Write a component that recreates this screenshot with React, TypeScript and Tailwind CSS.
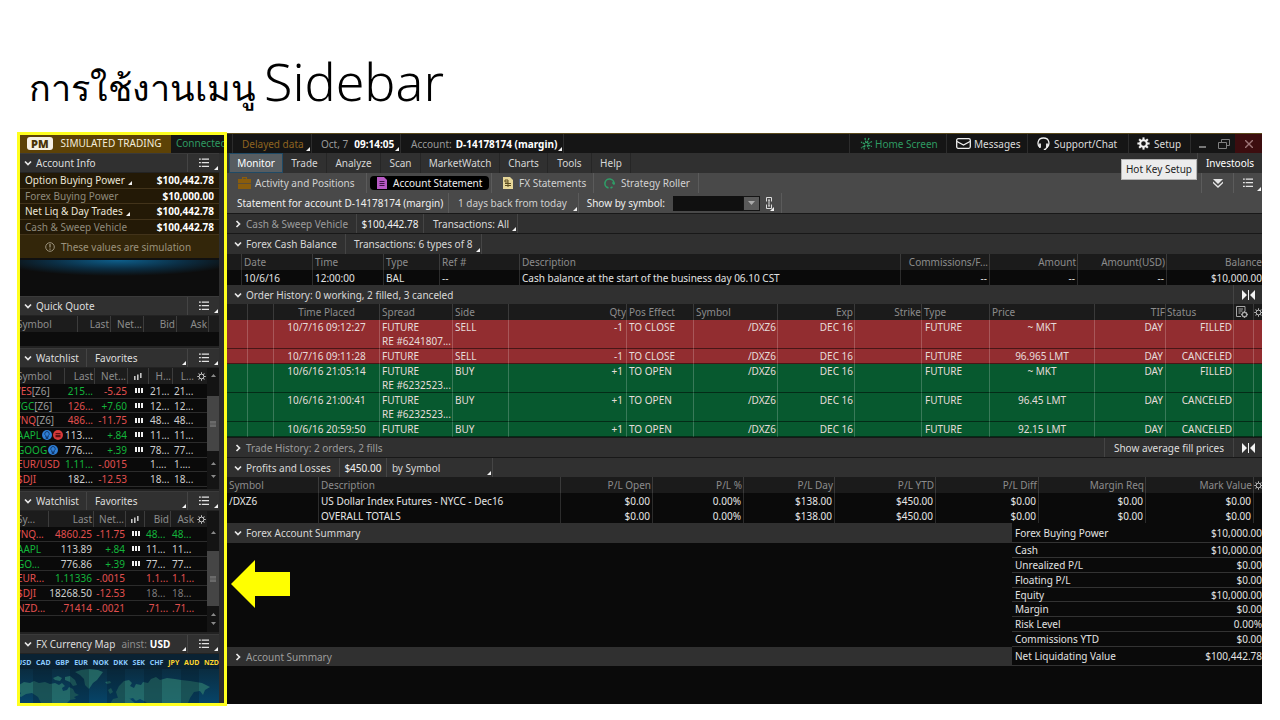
import type { ReactNode } from "react";

function Corner() {
  return (
    <svg className="absolute bottom-0.5 right-px size-[4px]" viewBox="0 0 4 4" aria-hidden="true">
      <path d="M4 0v4H0z" fill="#f2f2f2" />
    </svg>
  );
}

function Chevron({ open = true }: { open?: boolean }) {
  return (
    <svg className="mr-1 size-2 shrink-0" viewBox="0 0 8 8" fill="none" stroke="#e8e8e8" strokeWidth="1.7" aria-hidden="true">
      {open ? <path d="M1 2.5 4 5.5 7 2.5" /> : <path d="M2.5 1 5.5 4 2.5 7" />}
    </svg>
  );
}

function ListIcon() {
  return (
    <svg className="h-[10px] w-[10px]" viewBox="0 0 11 10" fill="#e4e4e4" aria-hidden="true">
      <path d="M0 0h2v1.4H0zM3 0h8v1.4H3zM0 4h2v1.4H0zM3 4h8v1.4H3zM0 8h2v1.4H0zM3 8h8v1.4H3z" />
    </svg>
  );
}

function Gear({ className, color = "#f0f0f0", thin = false }: { className: string; color?: string; thin?: boolean }) {
  const teeth = [0, 45, 90, 135, 180, 225, 270, 315];
  return (
    <svg className={className} viewBox="0 0 14 14" fill="none" stroke={color} aria-hidden="true">
      <circle cx="7" cy="7" r="3.6" strokeWidth={thin ? 1.5 : 2.2} />
      {teeth.map((t) => (
        <path key={t} d="M7 .4v2.800" strokeWidth={thin ? 1.5 : 2.2} transform={`rotate(${t} 7 7)`} />
      ))}
    </svg>
  );
}

function Bars() {
  return (
    <svg className="mx-auto block h-[5px] w-2" viewBox="0 0 8 5" fill="#f0f0f0" aria-hidden="true">
      <path d="M0 0h2v5H0zM3 0h2v5H3zM6 0h2v5H6z" />
    </svg>
  );
}

function ChartGlyph() {
  return (
    <svg className="mx-auto block h-[9px] w-2" viewBox="0 0 8 9" fill="#c4c4c4" aria-hidden="true">
      <path d="M0 4h1.6v4H0zM3 2.5h1.6v5.500H3zM6 1h1.600v5H6z" />
    </svg>
  );
}

function Collapse() {
  return (
    <svg className="h-[10px] w-[13px]" viewBox="0 0 13 10" fill="#f2f2f2" aria-hidden="true">
      <path d="M0 0l5 5-5 5zM13 0L8 5l5 5zM6 0h1v10H6z" />
    </svg>
  );
}

function Cell({ className = "", children }: { className?: string; children?: ReactNode }) {
  return (
    <div className={`relative flex h-full shrink-0 items-center whitespace-nowrap border-r border-white/10 ${className}`}>
      {children}
    </div>
  );
}

function Cols({ widths }: { widths: (number | null)[] }) {
  return (
    <colgroup>
      {widths.map((w, i) => (
        <col key={i} style={w === null ? undefined : { width: w }} />
      ))}
    </colgroup>
  );
}

function PanelBar({ title, extra }: { title: string; extra?: ReactNode }) {
  return (
    <div className="flex h-5 border-y border-t-[#3a3a3a] border-b-[#232323] bg-[#303030] text-[#dedede]">
      <button className="flex items-center whitespace-nowrap pl-[7px]">
        <Chevron />
        {title}
      </button>
      {extra}
      <button className="relative ml-auto flex w-8 items-center justify-center border-l border-[#444]" aria-label={`${title} menu`}>
        <ListIcon />
        <Corner />
      </button>
    </div>
  );
}

function ScrollTrack({ lead }: { lead: string }) {
  return (
    <div className="flex w-3 shrink-0 flex-col items-center bg-[#141414]" aria-hidden="true">
      <div className={`flex w-full items-end justify-center ${lead}`}>
        <svg className="h-[3px] w-[5px]" viewBox="0 0 5 3" fill="#8a8a8a"><path d="M0 3h5L2.500 0z" /></svg>
      </div>
      <div className="flex h-[55px] w-full items-center justify-center bg-[#454545]">
        <div className="h-[6px] w-[6px] border-y-2 border-[#6a6a6a] bg-[#5e5e5e]" />
      </div>
      <div className="flex flex-1 flex-col items-center justify-evenly">
        <svg className="h-[3px] w-[5px]" viewBox="0 0 5 3" fill="#8a8a8a"><path d="M0 3h5L2.500 0z" /></svg>
        <svg className="h-[3px] w-[5px]" viewBox="0 0 5 3" fill="#8a8a8a"><path d="M0 0h5L2.500 3z" /></svg>
      </div>
    </div>
  );
}

const RED = "text-[#e2504f]";
const GREEN = "text-[#13b53b]";
const LIGHT = "text-[#cfcfcf]";
const DIM = "text-[#7c7c7c]";

type Quote = {
  sym: string;
  tail?: string;
  symColor: string;
  last: string;
  lastColor: string;
  net: string;
  netColor: string;
  bars: boolean;
  a: string;
  b: string;
  abColor: string;
  badges?: string[];
};

const quotesOne: Quote[] = [
  { sym: "/ES", tail: "[Z6]", symColor: RED, last: "215...", lastColor: GREEN, net: "-5.25", netColor: RED, bars: true, a: "21...", b: "21...", abColor: LIGHT },
  { sym: "/GC", tail: "[Z6]", symColor: GREEN, last: "126...", lastColor: RED, net: "+7.60", netColor: GREEN, bars: true, a: "12...", b: "12...", abColor: LIGHT },
  { sym: "/NQ", tail: "[Z6]", symColor: RED, last: "486...", lastColor: RED, net: "-11.75", netColor: RED, bars: true, a: "48...", b: "48...", abColor: LIGHT },
  { sym: "AAPL", symColor: GREEN, last: "113....", lastColor: LIGHT, net: "+.84", netColor: GREEN, bars: true, a: "11...", b: "11...", abColor: LIGHT, badges: ["#2f7fd6", "#d63a3a"] },
  { sym: "GOOG", symColor: GREEN, last: "776....", lastColor: LIGHT, net: "+.39", netColor: GREEN, bars: true, a: "78...", b: "77...", abColor: LIGHT, badges: ["#2f7fd6"] },
  { sym: "EUR/USD", symColor: RED, last: "1.11...", lastColor: GREEN, net: "-.0015", netColor: RED, bars: false, a: "1....", b: "1....", abColor: LIGHT },
  { sym: "$DJI", symColor: RED, last: "182...", lastColor: LIGHT, net: "-12.53", netColor: RED, bars: false, a: "18...", b: "18...", abColor: LIGHT },
];

const quotesTwo: Quote[] = [
  { sym: "/NQ...", symColor: RED, last: "4860.25", lastColor: RED, net: "-11.75", netColor: RED, bars: true, a: "48...", b: "48...", abColor: GREEN },
  { sym: "AAPL", symColor: GREEN, last: "113.89", lastColor: LIGHT, net: "+.84", netColor: GREEN, bars: true, a: "11...", b: "11...", abColor: LIGHT },
  { sym: "GO...", symColor: GREEN, last: "776.86", lastColor: LIGHT, net: "+.39", netColor: GREEN, bars: true, a: "77...", b: "77...", abColor: LIGHT },
  { sym: "EUR...", symColor: RED, last: "1.11336", lastColor: GREEN, net: "-.0015", netColor: RED, bars: false, a: "1.1...", b: "1.1...", abColor: RED },
  { sym: "$DJI", symColor: RED, last: "18268.50", lastColor: LIGHT, net: "-12.53", netColor: RED, bars: false, a: "18...", b: "18...", abColor: DIM },
  { sym: "NZD...", symColor: RED, last: ".71414", lastColor: RED, net: "-.0021", netColor: RED, bars: false, a: ".71...", b: ".71...", abColor: RED },
];

function Watchlist({ heads, widths, quotes, height, lead }: { heads: string[]; widths: number[]; quotes: Quote[]; height: string; lead: string }) {
  const th = "h-4 overflow-hidden whitespace-nowrap border-r border-[#3c3c3c] pr-px text-right font-normal";
  return (
    <>
      <PanelBar
        title="Watchlist"
        extra={
          <button className="relative ml-[7px] flex flex-1 items-center border-l border-[#444] pl-2">
            Favorites
            <Corner />
          </button>
        }
      />
      <div className="flex h-[121px] bg-[#0a0a0a]">
        <div className="min-w-0 flex-1">
          <table className="w-full table-fixed border-separate border-spacing-0">
            <Cols widths={widths} />
            <thead className="bg-[#1c1c1c] text-[#8c8c8c]">
              <tr>
                <th className={`${th} text-left!`}>{heads[0]}</th>
                <th className={th}>{heads[1]}</th>
                <th className={th}>{heads[2]}</th>
                <th className={th}><ChartGlyph /></th>
                <th className={th}>{heads[3]}</th>
                <th className={`${th} border-r-0!`}>{heads[4]}</th>
                <th className="h-4 font-normal"><Gear thin className="mx-auto size-[9px]" color="#c8c8c8" /></th>
              </tr>
            </thead>
          </table>
          <table className={`w-full table-fixed border-separate border-spacing-0 leading-[12px] ${height}`}>
            <Cols widths={widths} />
            <tbody>
              {quotes.map((q) => (
                <tr key={q.sym} className="whitespace-nowrap *:border-b *:border-[#2c2c2c]">
                  <td className={q.symColor}>
                    <span className="flex items-center">
                      {q.sym}
                      {q.tail && <span className="text-[#9a9a9a]">{q.tail}</span>}
                      {q.badges?.map((c) => (
                        <svg key={c} className="ml-px size-[10px] shrink-0" viewBox="0 0 10 10" aria-hidden="true">
                          <circle cx="5" cy="5" r="5" fill={c} />
                          {c === "#2f7fd6" ? (
                            <path d="M5 1.500a2.300 2.300 0 0 1 1.200 4.200V7H3.800V5.700A2.300 2.300 0 0 1 5 1.500zM4 7.600h2v.9H4z" fill="none" stroke="#0d2f5c" strokeWidth=".8" />
                          ) : (
                            <path d="M2.500 3h5v1.200h-5zM2.500 5h5v2.200h-5z" fill="#5c1010" />
                          )}
                        </svg>
                      ))}
                    </span>
                  </td>
                  <td className={`pr-[2px] text-right ${q.lastColor}`}><span className="flex justify-end">{q.last}</span></td>
                  <td className={`pr-px text-right ${q.netColor}`}><span className="flex justify-end">{q.net}</span></td>
                  <td>{q.bars && <Bars />}</td>
                  <td className={`pl-px ${q.abColor}`}>{q.a}</td>
                  <td className={`pl-px ${q.abColor}`}>{q.b}</td>
                  <td />
                </tr>
              ))}
            </tbody>
          </table>
        </div>
        <ScrollTrack lead={lead} />
      </div>
    </>
  );
}

const account = [
  { label: "Option Buying Power", value: "$100,442.78", menu: true },
  { label: "Forex Buying Power", value: "$10,000.00", menu: false },
  { label: "Net Liq & Day Trades", value: "$100,442.78", menu: true },
  { label: "Cash & Sweep Vehicle", value: "$100,442.78", menu: false },
];

const currencies = ["USD", "CAD", "GBP", "EUR", "NOK", "DKK", "SEK", "CHF", "JPY", "AUD", "NZD"];

function CurrencyMap() {
  return (
    <div className="flex h-[50px] flex-col bg-[#0a3149]">
      <div className="flex justify-between bg-[#0a2233] pt-[3px] text-[7px] font-bold leading-[12px]">
        {currencies.map((c, i) => (
          <span key={c} className={i > 7 ? "text-[#ffd52e]" : "text-[#8ccbff]"}>{c}</span>
        ))}
      </div>
      <svg className="w-full flex-1" viewBox="0 0 202 35" preserveAspectRatio="none" aria-hidden="true">
        <defs>
          <linearGradient id="sea" x1="0" y1="0" x2="0" y2="1">
            <stop offset="0" stopColor="#0a2c40" />
            <stop offset="1" stopColor="#06456a" />
          </linearGradient>
        </defs>
        <path d="M0 0h202v35H0z" fill="url(#sea)" />
        <g fill="#2b766c" opacity=".75">
          <path d="M2 16l5-3 6 1 4-2 5 2 6-1 5 2 5-1 4 2 3-2 3 3-3 2 1 3 4-1 2-3 4 2 2 4 4 2-5 2 2 2-6 1-4 4-2 4H27l-3-5-3-6-6-4-6 1-5 3-2-1 2-3-3-2z" />
          <path d="M36 9l5-2 4 2-2 3-5-1zM48 8l5-1 5 4 2 5-4 1-3-4-5-2z" />
          <path d="M58 3l6-2 8-1 9 1 5 2-3 4-3 4-4 3-4 6-4-4-1-6-4-4z" />
          <path d="M99 23l3-6 5-5 5-1 3 3-2 3 4 2 2-4 5 1 2-3 5 1 3-4 5-2 4 3 7-2 8 1 6 1 9 1 12 2 8 4-5 3-2 5-3-4-6 1-4 6-2 5-3 4h-9l-4-4-5 3-6-3-4 4h-8l-3-5-6-3-4 2-3-3-4 1-3 4-5 1-2-3z" />
          <path d="M88 13l5-1 1 2-4 1zM91 21l3-2 2 4-3 2zM96 30l8-2 9 2 6 5H93z" />
        </g>
        <g fill="#041826" opacity=".28">
          <path d="M16 0h19v35H16zM53 0h19v35H53zM90 0h18v35H90zM127 0h18v35h-18zM164 0h18v35h-18z" />
        </g>
      </svg>
    </div>
  );
}

function Sidebar() {
  return (
    <aside className="relative flex w-[210px] shrink-0 flex-col overflow-hidden bg-[#2d2d2d]">
      <div className="flex h-5 items-center whitespace-nowrap bg-[#151515]">
        <div className="flex h-full w-[154px] shrink-0 items-center bg-[#5d4206] pl-2.5 text-[#f3ecdc]">
          <span className="mr-2 rounded-[3px] bg-[#f6f1e4] px-1 text-[11px] font-black leading-[13px] text-[#4a3508]">PM</span>
          SIMULATED TRADING
        </div>
        <span className="pl-[5px] text-[#2f9a62]">Connected</span>
      </div>
      <div className="mr-2 flex flex-col bg-[#0c0c0c]">
        <PanelBar title="Account Info" />
        <table className="h-[62px] w-full border-separate border-spacing-0 bg-[#231906] leading-[14px]">
          <tbody>
            {account.map((r) => (
              <tr key={r.label} className="*:border-b *:border-[#42331a]">
                <th scope="row" className={`pl-2 text-left font-normal ${r.menu ? "text-[#ebe6d8]" : "text-[#8f8a7c]"}`}>
                  <span className="relative pr-2">
                    {r.label}
                    {r.menu && <Corner />}
                  </span>
                </th>
                <td className="pr-[5px] text-right font-bold text-white">{r.value}</td>
              </tr>
            ))}
          </tbody>
        </table>
        <div className="flex h-[23px] items-center justify-center gap-1.5 bg-[#33260a] text-[#9b927c]">
          <svg className="size-[10px]" viewBox="0 0 10 10" fill="none" stroke="currentColor" aria-hidden="true">
            <circle cx="5" cy="5" r="4.300" />
            <path d="M5 2v3.500M5 6.500v1.200" strokeWidth="1.300" />
          </svg>
          These values are simulation
        </div>
        <div className="h-[38px] border-t-2 border-[#101010] bg-[radial-gradient(ellipse_60%_16px_at_50%_0%,#0d5f8c,#0b2e44_55%,#0d0d0d)]" />
        <PanelBar title="Quick Quote" />
        <table className="w-full table-fixed border-separate border-spacing-0 bg-[#1c1c1c] text-[#8c8c8c]">
          <Cols widths={[61, 33, 33, 33, 32, null]} />
          <thead>
            <tr className="*:h-4 *:whitespace-nowrap *:border-r *:border-[#3c3c3c] *:pr-px *:text-right *:font-normal">
              <th className="text-left!">Symbol</th>
              <th>Last</th>
              <th>Net...</th>
              <th>Bid</th>
              <th>Ask</th>
              <th className="border-r-0!" />
            </tr>
          </thead>
        </table>
        <div className="h-4 border-b-2 border-[#222]" />
        <Watchlist heads={["Symbol", "Last", "Net...", "H...", "L..."]} widths={[48, 30, 33, 21, 24, 22, 12]} quotes={quotesOne} height="h-[103px]" lead="h-7 pb-[19px]" />
        <div className="h-0.5 bg-[#222]" />
        <Watchlist heads={["Sy...", "Last", "Net...", "Bid", "Ask"]} widths={[32, 45, 32, 19, 26, 24, 12]} quotes={quotesTwo} height="h-[89px]" lead="h-10 pb-[17px]" />
        <div className="h-0.5 bg-[#222]" />
        <PanelBar
          title="FX Currency Map"
          extra={
            <button className="relative flex flex-1 items-center gap-[3px] pl-1.5">
              <span className="text-[#8d8d8d]">ainst:</span>
              <b className="text-white">USD</b>
              <Corner />
            </button>
          }
        />
        <CurrencyMap />
      </div>
    </aside>
  );
}

function TopBar() {
  return (
    <header className="flex h-5 border-t border-[#5a4a1c] bg-[#151515] text-[#dcdcdc]">
      <Cell className="w-[6px]" />
      <Cell className="w-[79px] pl-[9px] text-[#8f6420]">Delayed data<Corner /></Cell>
      <Cell className="w-[89px] gap-1.5 pl-[9px]"><span className="text-[#9a9a9a]">Oct, 7</span><b className="text-white">09:14:05</b><Corner /></Cell>
      <Cell className="w-[163px] gap-1 pl-2.5"><span className="text-[#9a9a9a]">Account:</span><b className="text-white">D-14178174 (margin)</b><Corner /></Cell>
      <Cell className="min-w-0 flex-1 shrink" />
      <Cell className="w-[97px] gap-0.5 pl-2.5 text-[#2f9a62]">
        <svg className="size-[13px]" viewBox="0 0 13 13" fill="none" stroke="#2fa066" strokeWidth="1.300" aria-hidden="true">
          <path d="M6 6 5 1M7 6l2-5M7.500 7 12 4.500M8 8l4 1.500M7 8l2 4M5 8l-1 4.500M5 7 1 5M4.500 9 1 11" strokeDasharray="2.500 .7" />
        </svg>
        Home Screen
      </Cell>
      <Cell className="w-[81px] gap-[3px] pl-[9px]">
        <svg className="h-[11px] w-[15px]" viewBox="0 0 15 11" fill="none" stroke="#f0f0f0" strokeWidth="1.300" aria-hidden="true">
          <rect x=".7" y=".7" width="13.600" height="9.600" rx="1.500" />
          <path d="M1 3.500 7.500 7 14 3.500" />
        </svg>
        Messages
      </Cell>
      <Cell className="w-[101px] gap-1 pl-[9px]">
        <svg className="size-[13px]" viewBox="0 0 13 13" fill="none" stroke="#f0f0f0" strokeWidth="1.300" aria-hidden="true">
          <path d="M3 10.500C-.2 8 .2 1 6.500 1S13.200 8 9.800 10.500" />
          <path d="M3 6.500v4.200M10 6.500v4.200" strokeWidth="1.800" />
          <path d="M9.800 10.500 8.300 12.300H6.800" />
        </svg>
        Support/Chat
      </Cell>
      <Cell className="w-[62px] gap-1 pl-2"><Gear className="size-[13px]" />Setup</Cell>
      <button className="flex w-[22px] items-center justify-center" aria-label="Minimize"><span className="mt-1.5 h-[2px] w-[7px] bg-[#777]" /></button>
      <button className="flex w-[22px] items-center justify-center" aria-label="Restore">
        <svg className="h-2.5 w-3" viewBox="0 0 12 10" fill="none" stroke="#808080" aria-hidden="true"><path d="M3.500 3V.5h8v6H9M.5 3.500h8v6h-8z" /></svg>
      </button>
      <button className="flex w-[27px] items-center justify-center bg-[#3c0d0f]" aria-label="Close">
        <svg className="size-2" viewBox="0 0 8 8" stroke="#9c7476" strokeWidth="1.400" aria-hidden="true"><path d="M0 0l8 8M8 0 0 8" /></svg>
      </button>
    </header>
  );
}

function Menu() {
  const item = "h-full border-r border-[#262626] text-center";
  return (
    <nav className="flex h-5 bg-[#303030] text-[#d6d6d6]">
      <button className="ml-0.5 h-full w-[54px] border border-[#1f4a66] bg-[#575d61] text-white">Monitor</button>
      <button className={`${item} w-11`}>Trade</button>
      <button className={`${item} w-[54px]`}>Analyze</button>
      <button className={`${item} w-10`}>Scan</button>
      <button className={`${item} w-[79px]`}>MarketWatch</button>
      <button className={`${item} w-12`}>Charts</button>
      <button className={`${item} w-11`}>Tools</button>
      <button className={`${item} w-[39px]`}>Help</button>
      <button className="ml-auto w-[65px] border-l border-[#444] text-center text-white">Investools</button>
    </nav>
  );
}

function SubTabs() {
  return (
    <div className="flex h-5 bg-[#494949] text-[#d2d2d2]">
      <Cell className="w-[140px] gap-1 pl-[11px]">
        <svg className="h-3 w-[13px]" viewBox="0 0 13 12" fill="#8a5d0c" aria-hidden="true"><path d="M4 2V0h5v2h4v4H0V2zM5.200 1.200V2h2.600v-.8zM0 6.800h13V12H0z" /></svg>
        Activity and Positions
      </Cell>
      <Cell className="w-[125px] pl-[3px]">
        <button className="flex h-[14px] w-[119px] items-center gap-1.5 rounded bg-black pl-[7px] text-[#eee]">
          <svg className="h-3 w-2.5" viewBox="0 0 10 12" aria-hidden="true">
            <path d="M0 0h7l3 3v9H0z" fill="#b759c4" />
            <path d="M2.500 4.500h5M2.500 6.500h5M2.500 8.500h5" stroke="#3f1546" />
          </svg>
          Account Statement
        </button>
      </Cell>
      <Cell className="w-[102px] gap-1.5 pl-[11px]">
        <svg className="h-3 w-[10px]" viewBox="0 0 10 12" aria-hidden="true">
          <path d="M0 0h7l3 3v9H0z" fill="#e6d698" />
          <path d="M2 3h3v2H2zM2 6.500h6M2 8.500h6M5 5v5" stroke="#5c4d20" fill="none" />
        </svg>
        FX Statements
      </Cell>
      <Cell className="w-[105px] gap-1.5 pl-2.5">
        <svg className="size-[11px]" viewBox="0 0 11 11" fill="none" stroke="#2f9c67" strokeWidth="1.600" aria-hidden="true">
          <path d="M4.500 9.900A4.500 4.500 0 1 1 9.900 6M6.500 9.900 8.500 9" />
          <path d="M8.200 4.500l1.700 1.800L11 4.500" strokeWidth="1.200" />
        </svg>
        Strategy Roller
      </Cell>
      <div className="flex-1" />
      <button className="flex w-8 items-center justify-center border-l border-[#5c5c5c]" aria-label="Expand all">
        <svg className="h-[9px] w-[10px]" viewBox="0 0 10 9" fill="#e6e6e6" aria-hidden="true"><path d="M0 0h10L5 5zM0 2.500 5 7l5-4.500v1.700L5 9 0 4.200z" /></svg>
      </button>
      <button className="relative flex w-[29px] items-center justify-center border-l border-[#5c5c5c]" aria-label="View options"><ListIcon /><Corner /></button>
    </div>
  );
}

function StatementBar() {
  return (
    <div className="flex h-[21px] border-b border-[#181818] bg-[#494949] text-[#f0f0f0]">
      <Cell className="w-[222px] pl-2.5">Statement for account D-14178174 (margin)</Cell>
      <Cell className="w-[130px] pl-[9px] text-[#d0d0d0]">1 days back from today<Corner /></Cell>
      <Cell className="w-[203px] justify-end">
        <label htmlFor="symbol" className="mr-2">Show by symbol:</label>
        <input id="symbol" className="h-[15px] w-[70px] bg-[#101010] px-1 text-white outline-none" />
        <button className="flex h-[15px] w-[17px] items-center justify-center border border-[#151515] bg-[#5a5a5a]" aria-label="Choose symbol">
          <svg className="h-1 w-[7px]" viewBox="0 0 7 4" fill="#aaa" aria-hidden="true"><path d="M0 0h7L3.500 4z" /></svg>
        </button>
        <button className="relative ml-[6px] mr-1.5 flex h-full w-[9px] items-center" aria-label="Link">
          <svg className="h-3 w-[6px]" viewBox="0 0 6 12" fill="none" stroke="#ddd" aria-hidden="true">
            <path d="M.5 4.500v-4h5v4M.5 7.500v4h5v-4M3 3v6M2 3h2M2 9h2" />
          </svg>
          <Corner />
        </button>
      </Cell>
    </div>
  );
}

function Section({ title, open = true, dim = false, className, children }: { title: string; open?: boolean; dim?: boolean; className: string; children?: ReactNode }) {
  return (
    <div className={`flex border-[#181818] bg-[#303030] text-[#d8d8d8] ${className}`}>
      <button className={`flex items-center whitespace-nowrap pl-[7px] ${dim ? "text-[#9c9c9c]" : ""}`}>
        <Chevron open={open} />
        {title}
      </button>
      {children}
    </div>
  );
}

const TABLE = "w-full table-fixed border-separate border-spacing-0";
const HEAD = "bg-[#1b1b1b] text-[#8c8c8c] *:h-4 *:whitespace-nowrap *:border-r *:border-[#3a3a3a] *:px-[2px] *:font-normal";

function CashTable() {
  return (
    <table className={TABLE}>
      <Cols widths={[15, 71, 71, 56, 80, null, 89, 88, 89, 95]} />
      <thead>
        <tr className={`${HEAD} *:text-left`}>
          <th />
          <th>Date</th>
          <th>Time</th>
          <th>Type</th>
          <th>Ref #</th>
          <th>Description</th>
          <th className="px-px! text-right!">Commissions/F...</th>
          <th className="px-px! text-right!">Amount</th>
          <th className="px-px! text-right!">Amount(USD)</th>
          <th className="border-r-0! pr-0! text-right!">Balance</th>
        </tr>
      </thead>
      <tbody>
        <tr className="text-[#e2e2e2] *:h-[15px] *:whitespace-nowrap *:border-r *:border-[#2c2c2c] *:px-[2px]">
          <td />
          <td>10/6/16</td>
          <td>12:00:00</td>
          <td>BAL</td>
          <td>--</td>
          <td>Cash balance at the start of the business day 06.10 CST</td>
          <td className="text-right">--</td>
          <td className="text-right">--</td>
          <td className="text-right">--</td>
          <td className="border-r-0! pr-0! text-right">$10,000.00</td>
        </tr>
      </tbody>
    </table>
  );
}

const orders = [
  { time: "10/7/16 09:12:27", re: "RE #6241807...", side: "SELL", price: "~ MKT", status: "FILLED" },
  { time: "10/7/16 09:11:28", re: "", side: "SELL", price: "96.965 LMT", status: "CANCELED" },
  { time: "10/6/16 21:05:14", re: "RE #6232523...", side: "BUY", price: "~ MKT", status: "FILLED" },
  { time: "10/6/16 21:00:41", re: "RE #6232523...", side: "BUY", price: "96.45 LMT", status: "CANCELED" },
  { time: "10/6/16 20:59:50", re: "", side: "BUY", price: "92.15 LMT", status: "CANCELED" },
];

function Orders() {
  const widths = [21, 26, 106, 73, 56, null, 67, 84, 77, 67, 68, 105, 71, 68, 20, 8];
  return (
    <table className={TABLE}>
      <Cols widths={widths} />
      <thead>
        <tr className={`${HEAD} *:text-left`}>
          <th />
          <th />
          <th className="text-center!">Time Placed</th>
          <th>Spread</th>
          <th>Side</th>
          <th className="px-0! text-right!">Qty</th>
          <th>Pos Effect</th>
          <th>Symbol</th>
          <th className="px-px! text-right!">Exp</th>
          <th className="px-0! text-right!">Strike</th>
          <th>Type</th>
          <th>Price</th>
          <th className="px-0! text-right!">TIF</th>
          <th className="px-px!">Status</th>
          <th>
            <svg className="h-3 w-3" viewBox="0 0 12 12" fill="none" stroke="#a8a8a8" aria-hidden="true">
              <path d="M9 5V.5H.5v10H5M2.500 3h4.500M2.500 5h4M2.500 7h2" />
              <circle cx="8.500" cy="8.500" r="2.300" strokeWidth="1.400" />
              <path d="M8.500 5v1M8.500 11v1M5 8.500h1M11 8.500h1" />
            </svg>
          </th>
          <th className="overflow-hidden border-r-0! px-0!"><Gear thin className="size-[9px] max-w-none" color="#bbb" /></th>
        </tr>
      </thead>
      <tbody className="leading-[14px]">
        {orders.map((o) => (
          <tr
            key={o.time}
            className={`text-[#e6dcda] *:whitespace-nowrap *:border-b *:border-r *:border-b-black/50 *:border-r-white/20 *:px-[3px] *:align-top ${o.side === "SELL" ? "bg-[#922d30]" : "bg-[#07592f]"}`}
          >
            <td />
            <td />
            <td className="text-center">{o.time}</td>
            <td className="pl-[2px]! pr-0!">FUTURE{o.re && <><br />{o.re}</>}</td>
            <td className="pl-[2px]!">{o.side}</td>
            <td className="text-right">{o.side === "SELL" ? "-1" : "+1"}</td>
            <td className="pl-[2px]!">{o.side === "SELL" ? "TO CLOSE" : "TO OPEN"}</td>
            <td className="px-px! text-right">/DXZ6</td>
            <td className="px-px! text-right">DEC 16</td>
            <td />
            <td>FUTURE</td>
            <td className="text-center">{o.price}</td>
            <td className="px-[2px]! text-right">DAY</td>
            <td className="px-px! text-right">{o.status}</td>
            <td />
            <td className="border-r-0!" />
          </tr>
        ))}
      </tbody>
    </table>
  );
}

const plHeads = ["P/L Open", "P/L %", "P/L Day", "P/L YTD", "P/L Diff", "Margin Req", "Mark Value"];
const plValues = ["$0.00", "0.00%", "$138.00", "$450.00", "$0.00", "$0.00", "$0.00"];

function ProfitTable() {
  return (
    <table className={TABLE}>
      <Cols widths={[92, null, 92, 91, 91, 101, 103, 107, 108, 8]} />
      <thead>
        <tr className={`${HEAD} *:text-right`}>
          <th className="text-left!">Symbol</th>
          <th className="text-left!">Description</th>
          {plHeads.map((h) => <th key={h} className="px-px!">{h}</th>)}
          <th className="overflow-hidden border-r-0! px-0!"><Gear thin className="size-[9px] max-w-none" color="#bbb" /></th>
        </tr>
      </thead>
      <tbody>
        {[["/DXZ6", "US Dollar Index Futures - NYCC - Dec16"], ["", "OVERALL TOTALS"]].map(([s, d]) => (
          <tr key={d} className="text-[#e6e6e6] *:h-[15px] *:whitespace-nowrap *:border-r *:border-[#2c2c2c] *:px-[2px]">
            <td>{s}</td>
            <td>{d}</td>
            {plValues.map((v, i) => <td key={i} className="text-right">{v}</td>)}
            <td className="border-r-0!" />
          </tr>
        ))}
      </tbody>
    </table>
  );
}

const forexRows = [
  ["Cash", "$10,000.00"],
  ["Unrealized P/L", "$0.00"],
  ["Floating P/L", "$0.00"],
  ["Equity", "$10,000.00"],
  ["Margin", "$0.00"],
  ["Risk Level", "0.00%"],
  ["Commissions YTD", "$0.00"],
];

function Line({ label, value, className }: { label: string; value: string; className: string }) {
  return (
    <div className={`flex items-center justify-between border-b border-[#333] pl-[3px] leading-[12px] ${className}`}>
      <span>{label}</span>
      <span>{value}</span>
    </div>
  );
}

export default function App() {
  return (
    <div className="flex min-h-screen flex-col bg-white pl-[17px] pr-[18px] font-['Noto_Sans',sans-serif] text-[10px] leading-[14px]">
      <h1 className="flex h-[133px] items-end whitespace-nowrap pb-2.5 pl-3 text-black">
        <span className="flex items-baseline gap-2 text-[52px] font-light leading-[70px]">
          <span className="text-[36px] font-normal">การใช้งานเมนู</span>
          <span>Sidebar</span>
        </span>
      </h1>
      <div className="relative flex">
        <Sidebar />
        <main className="min-w-0 flex-1 overflow-hidden bg-[#0a0a0a]">
          <TopBar />
          <Menu />
          <SubTabs />
          <StatementBar />
          <Section title="Cash & Sweep Vehicle" open={false} dim className="h-5 border-b">
            <Cell className="ml-2 w-[68px] justify-center border-l text-[#f0f0f0]">$100,442.78</Cell>
            <Cell className="w-[94px] pl-[9px]">Transactions: All<Corner /></Cell>
          </Section>
          <Section title="Forex Cash Balance" className="h-5">
            <Cell className="ml-2 w-[137px] border-l pl-2">Transactions: 6 types of 8<Corner /></Cell>
          </Section>
          <CashTable />
          <Section title="Order History: 0 working, 2 filled, 3 canceled" className="h-[19px]">
            <button className="ml-auto flex w-[29px] items-center justify-center border-l border-[#444]" aria-label="Collapse columns"><Collapse /></button>
          </Section>
          <Orders />
          <Section title="Trade History: 2 orders, 2 fills" open={false} dim className="h-[21px] border-y">
            <button className="ml-auto w-[129px] border-l border-[#444] text-center text-[#dedede]">Show average fill prices</button>
            <button className="flex w-[29px] items-center justify-center border-l border-[#444]" aria-label="Collapse columns"><Collapse /></button>
          </Section>
          <Section title="Profits and Losses" className="h-[19px]">
            <Cell className="ml-2 w-12 justify-center border-l text-[#f0f0f0]">$450.00</Cell>
            <Cell className="w-[106px] pl-[5px]">by Symbol<Corner /></Cell>
          </Section>
          <ProfitTable />
          <div className="flex">
            <div className="flex-1">
              <Section title="Forex Account Summary" className="h-5" />
              <div className="h-[104px]" />
              <Section title="Account Summary" open={false} dim className="h-[19px]" />
            </div>
            <div className="flex w-[250px] flex-col text-[#e2e2e2]">
              <Line label="Forex Buying Power" value="$10,000.00" className="h-5" />
              <div className="flex h-[104px] flex-col">
                {forexRows.map(([l, v]) => <Line key={l} label={l} value={v} className="flex-1" />)}
              </div>
              <Line label="Net Liquidating Value" value="$100,442.78" className="h-[19px]" />
            </div>
          </div>
        </main>
        <div className="absolute right-[65px] top-[26px] w-[76px] border border-[#b5b5b5] bg-[#ececec] text-center leading-[19px] text-[#1c1c1c]" role="tooltip">
          Hot Key Setup
        </div>
        <div className="pointer-events-none absolute -bottom-0.5 -top-px left-0 w-[210px] border-3 border-[#ffff1f]" />
        <svg className="pointer-events-none absolute left-[214px] top-[427px] h-12 w-[59px]" viewBox="0 0 59 48" aria-hidden="true">
          <path d="M0 24 24 0v12h35v24H24v12z" fill="#ffff00" />
        </svg>
      </div>
    </div>
  );
}
